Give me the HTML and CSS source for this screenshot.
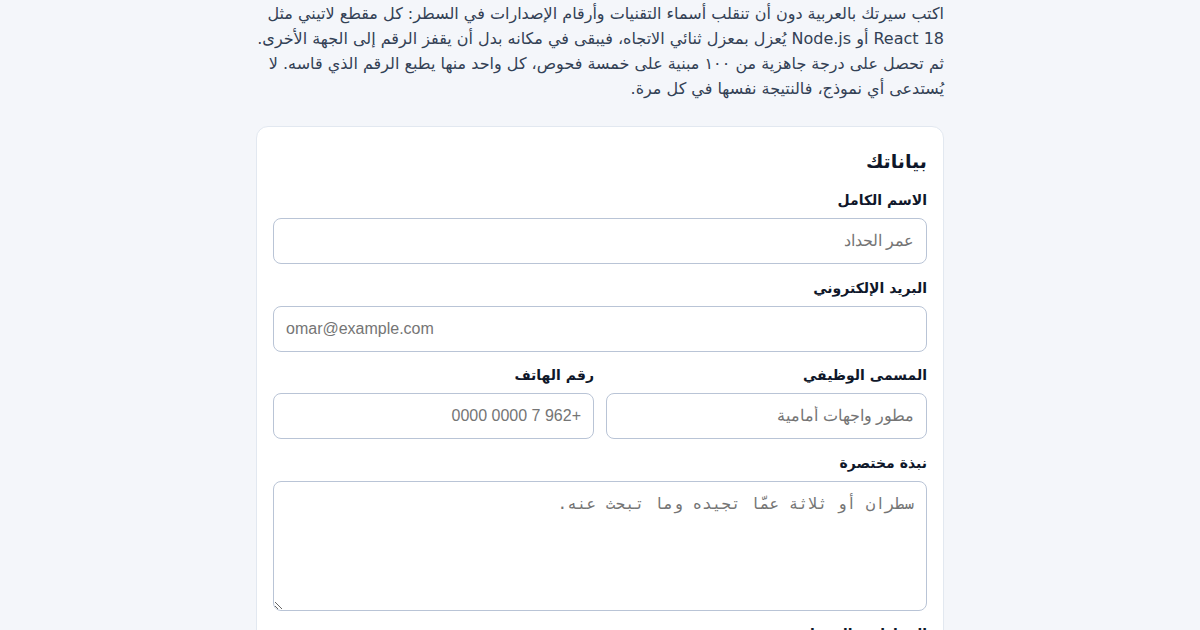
FILE: index.html
```html
<!DOCTYPE html>
<html lang="ar" dir="rtl">
<head>
<meta charset="utf-8">
<title>بياناتك</title>
<link rel="stylesheet" href="styles.css">
</head>
<body>
<main class="page">
  <p class="intro">اكتب سيرتك بالعربية دون أن تنقلب أسماء التقنيات وأرقام الإصدارات في السطر: كل مقطع لاتيني مثل <bdi>React 18</bdi> أو <bdi>Node.js</bdi> يُعزل بمعزل ثنائي الاتجاه، فيبقى في مكانه بدل أن يقفز الرقم إلى الجهة الأخرى. ثم تحصل على درجة جاهزية من ١٠٠ مبنية على خمسة فحوص، كل واحد منها يطبع الرقم الذي قاسه. لا يُستدعى أي نموذج، فالنتيجة نفسها في كل مرة.</p>
  <section class="card">
    <h2 class="card-title">بياناتك</h2>
    <div class="field">
      <label class="label" for="name">الاسم الكامل</label>
      <input class="input" id="name" type="text" placeholder="عمر الحداد">
    </div>
    <div class="field">
      <label class="label" for="email">البريد الإلكتروني</label>
      <input class="input ltr" id="email" type="email" dir="ltr" placeholder="omar@example.com">
    </div>
    <div class="row">
      <div class="field">
        <label class="label" for="title">المسمى الوظيفي</label>
        <input class="input" id="title" type="text" placeholder="مطور واجهات أمامية">
      </div>
      <div class="field">
        <label class="label" for="phone">رقم الهاتف</label>
        <input class="input" id="phone" type="text" placeholder="+962 7 0000 0000">
      </div>
    </div>
    <div class="field">
      <label class="label" for="bio">نبذة مختصرة</label>
      <textarea class="textarea" id="bio" placeholder="سطران أو ثلاثة عمّا تجيده وما تبحث عنه."></textarea>
    </div>
    <div class="field">
      <label class="label" for="skills">المهارات والتقنيات</label>
      <input class="input" id="skills" type="text" placeholder="React 18، TypeScript">
    </div>
  </section>
</main>
</body>
</html>
```
FILE: styles.css
```css
html, body {
  margin: 0;
  padding: 0;
}
body {
  background: #f4f6fa;
  font-family: "DejaVu Sans", sans-serif;
  color: #1e293b;
}
.page {
  max-width: 688px;
  margin: 0 auto;
  padding-top: 1px;
}
.intro {
  margin: 0 0 25px;
  font-size: 16px;
  line-height: 25px;
  color: #334155;
}
.card {
  background: #ffffff;
  border: 1px solid #e2e8f0;
  border-radius: 12px;
  padding: 20px 16px;
}
.card-title {
  margin: 0 0 15px;
  font-size: 19px;
  line-height: 28px;
  font-weight: 700;
  color: #0f172a;
}
.field {
  display: flex;
  flex-direction: column;
  margin-bottom: 13.5px;
  min-width: 0;
}
.row {
  display: grid;
  grid-template-columns: 1fr 1fr;
  gap: 12px;
}
.label {
  font-size: 14px;
  line-height: 21px;
  font-weight: 700;
  color: #0f172a;
  margin-bottom: 7px;
}
.input, .textarea {
  box-sizing: border-box;
  width: 100%;
  border: 1px solid #b9c4d6;
  border-radius: 8px;
  background: #ffffff;
  padding: 0 12px;
  font-size: 16px;
  color: #0f172a;
  direction: rtl;
}
.input {
  height: 46px;
  font-family: "Liberation Sans", sans-serif;
}
.input.ltr {
  direction: ltr;
  text-align: left;
}
.textarea {
  height: 130px;
  padding: 12px;
  font-family: "DejaVu Sans Mono", monospace;
  resize: vertical;
}
.input::placeholder, .textarea::placeholder {
  color: #757575;
}
```
